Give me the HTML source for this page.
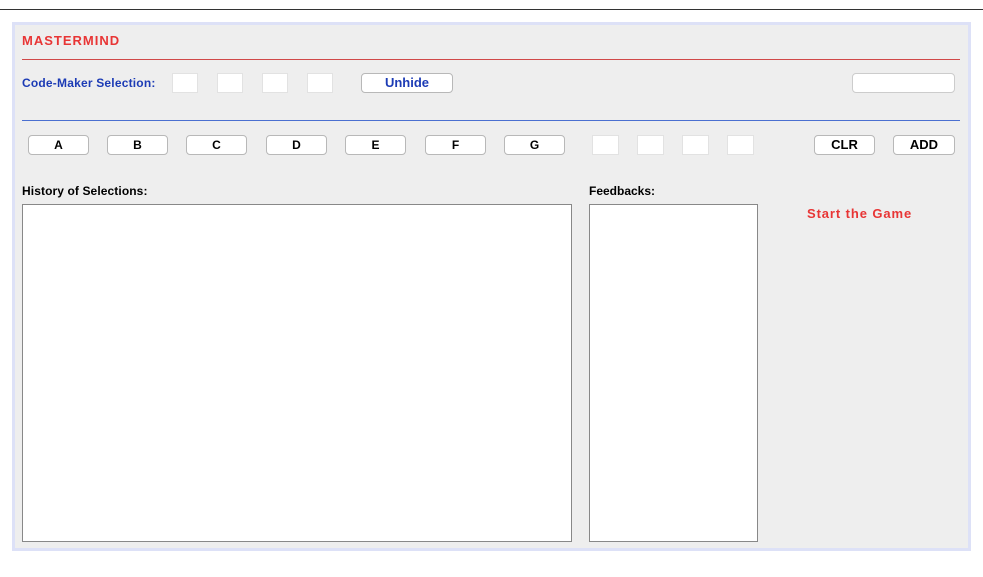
<!DOCTYPE html>
<html><head><style>
body{margin:0;width:983px;height:577px;background:#fff;position:relative;font-family:"Liberation Sans",Arial,sans-serif;overflow:hidden}
.a{position:absolute}
.panel{left:12px;top:22px;width:953px;height:523px;background:#eeeeee;border:3px solid #dde1f7}
.box{position:absolute;background:#fff;border:1px solid #e2e2e2;box-sizing:border-box}
.btn{position:absolute;background:#fff;border:1px solid #b8b8b8;border-radius:4px;box-sizing:border-box;font-weight:bold;font-size:12px;text-align:center;line-height:18px;color:#000}
.lbl{position:absolute;font-weight:bold;font-size:12px}
.ta{position:absolute;background:#fff;border:1px solid #888;box-sizing:border-box}
</style></head><body>
<div class="a" style="left:0;top:9px;width:983px;height:1px;background:#333"></div>
<div class="a panel"></div>
<div class="lbl" style="left:22px;top:33px;font-size:13px;color:#e83535;letter-spacing:1px">MASTERMIND</div>
<div class="a" style="left:22px;top:59px;width:938px;height:1px;background:#d04848"></div>
<div class="lbl" style="left:22px;top:76px;color:#1c3bb5;letter-spacing:0.2px">Code-Maker Selection:</div>
<div class="box" style="left:172px;top:73px;width:26px;height:20px"></div>
<div class="box" style="left:217px;top:73px;width:26px;height:20px"></div>
<div class="box" style="left:262px;top:73px;width:26px;height:20px"></div>
<div class="box" style="left:307px;top:73px;width:26px;height:20px"></div>
<div class="btn" style="left:361px;top:73px;width:92px;height:20px;color:#1c3bb5;font-size:13px">Unhide</div>
<div class="btn" style="left:852px;top:73px;width:103px;height:20px;border-color:#ccc"></div>
<div class="a" style="left:22px;top:120px;width:938px;height:1px;background:#4a6fd0"></div>
<div class="btn" style="left:28px;top:135px;width:61px;height:20px">A</div>
<div class="btn" style="left:107px;top:135px;width:61px;height:20px">B</div>
<div class="btn" style="left:186px;top:135px;width:61px;height:20px">C</div>
<div class="btn" style="left:266px;top:135px;width:61px;height:20px">D</div>
<div class="btn" style="left:345px;top:135px;width:61px;height:20px">E</div>
<div class="btn" style="left:425px;top:135px;width:61px;height:20px">F</div>
<div class="btn" style="left:504px;top:135px;width:61px;height:20px">G</div>
<div class="box" style="left:592px;top:135px;width:27px;height:20px"></div>
<div class="box" style="left:637px;top:135px;width:27px;height:20px"></div>
<div class="box" style="left:682px;top:135px;width:27px;height:20px"></div>
<div class="box" style="left:727px;top:135px;width:27px;height:20px"></div>
<div class="btn" style="left:814px;top:135px;width:61px;height:20px;font-size:13px">CLR</div>
<div class="btn" style="left:893px;top:135px;width:62px;height:20px;font-size:13px">ADD</div>
<div class="lbl" style="left:22px;top:184px;letter-spacing:0.1px">History of Selections:</div>
<div class="ta" style="left:22px;top:204px;width:550px;height:338px"></div>
<div class="lbl" style="left:589px;top:184px">Feedbacks:</div>
<div class="ta" style="left:589px;top:204px;width:169px;height:338px"></div>
<div class="lbl" style="left:807px;top:206px;font-size:13px;color:#e83535;letter-spacing:0.9px">Start the Game</div>
</body></html>
